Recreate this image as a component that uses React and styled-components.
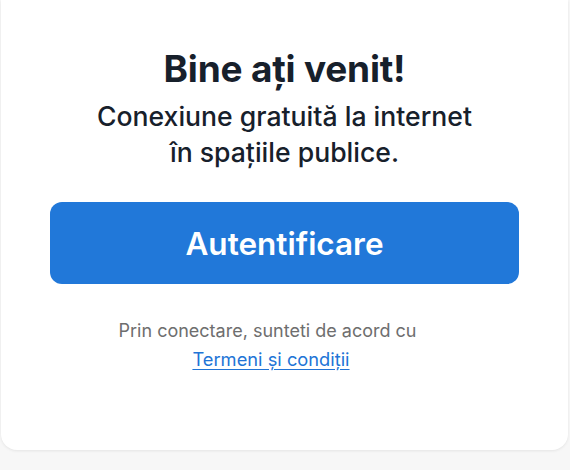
import React from 'react';
import styled, { createGlobalStyle } from 'styled-components';

const GlobalStyle = createGlobalStyle`
  html, body {
    margin: 0;
    padding: 0;
    background: #f7f7f7;
    font-family: Inter, "Noto Sans", sans-serif;
  }
`;

const Page = styled.div`
  width: 570px;
  height: 470px;
  padding: 0 2px 20px 1px;
  box-sizing: border-box;
  background: #f7f7f7;
`;

const Card = styled.div`
  height: 100%;
  background: #ffffff;
  border-radius: 0 0 16px 16px;
  box-shadow: 0 1px 3px rgba(0, 0, 0, 0.08);
  display: flex;
  flex-direction: column;
  align-items: center;
  padding: 46px 49px 0 49px;
  box-sizing: border-box;
`;

const Title = styled.h1`
  margin: 0;
  font-size: 37px;
  font-weight: 700;
  color: #17202b;
  line-height: 46px;
  letter-spacing: -0.2px;
`;

const Subtitle = styled.p`
  margin: 6px 0 0;
  font-size: 26.6px;
  font-weight: 500;
  color: #17202b;
  line-height: 36px;
  text-align: center;
`;

const Button = styled.button`
  margin-top: 32px;
  width: 100%;
  height: 82px;
  border: none;
  border-radius: 12px;
  background: #2178d9;
  color: #ffffff;
  font-family: inherit;
  font-size: 31.5px;
  font-weight: 600;
  cursor: pointer;
`;

const Terms = styled.div`
  margin-top: 35px;
  padding-right: 34px;
  display: flex;
  flex-direction: column;
  align-items: center;
  gap: 4px;
  font-size: 18px;
  line-height: 24px;
  color: #6e6e6e;
`;

const Link = styled.a`
  margin-left: 7px;
  color: #2174d6;
  font-size: 18.3px;
  text-decoration: underline;
  text-underline-offset: 3px;
`;

export default function App() {
  return (
    <>
      <GlobalStyle />
      <Page>
        <Card>
          <Title>Bine ați venit!</Title>
          <Subtitle>
            Conexiune gratuită la internet
            <br />
            în spațiile publice.
          </Subtitle>
          <Button>Autentificare</Button>
          <Terms>
            <span>Prin conectare, sunteti de acord cu</span>
            <Link href="#">Termeni și condiții</Link>
          </Terms>
        </Card>
      </Page>
    </>
  );
}
